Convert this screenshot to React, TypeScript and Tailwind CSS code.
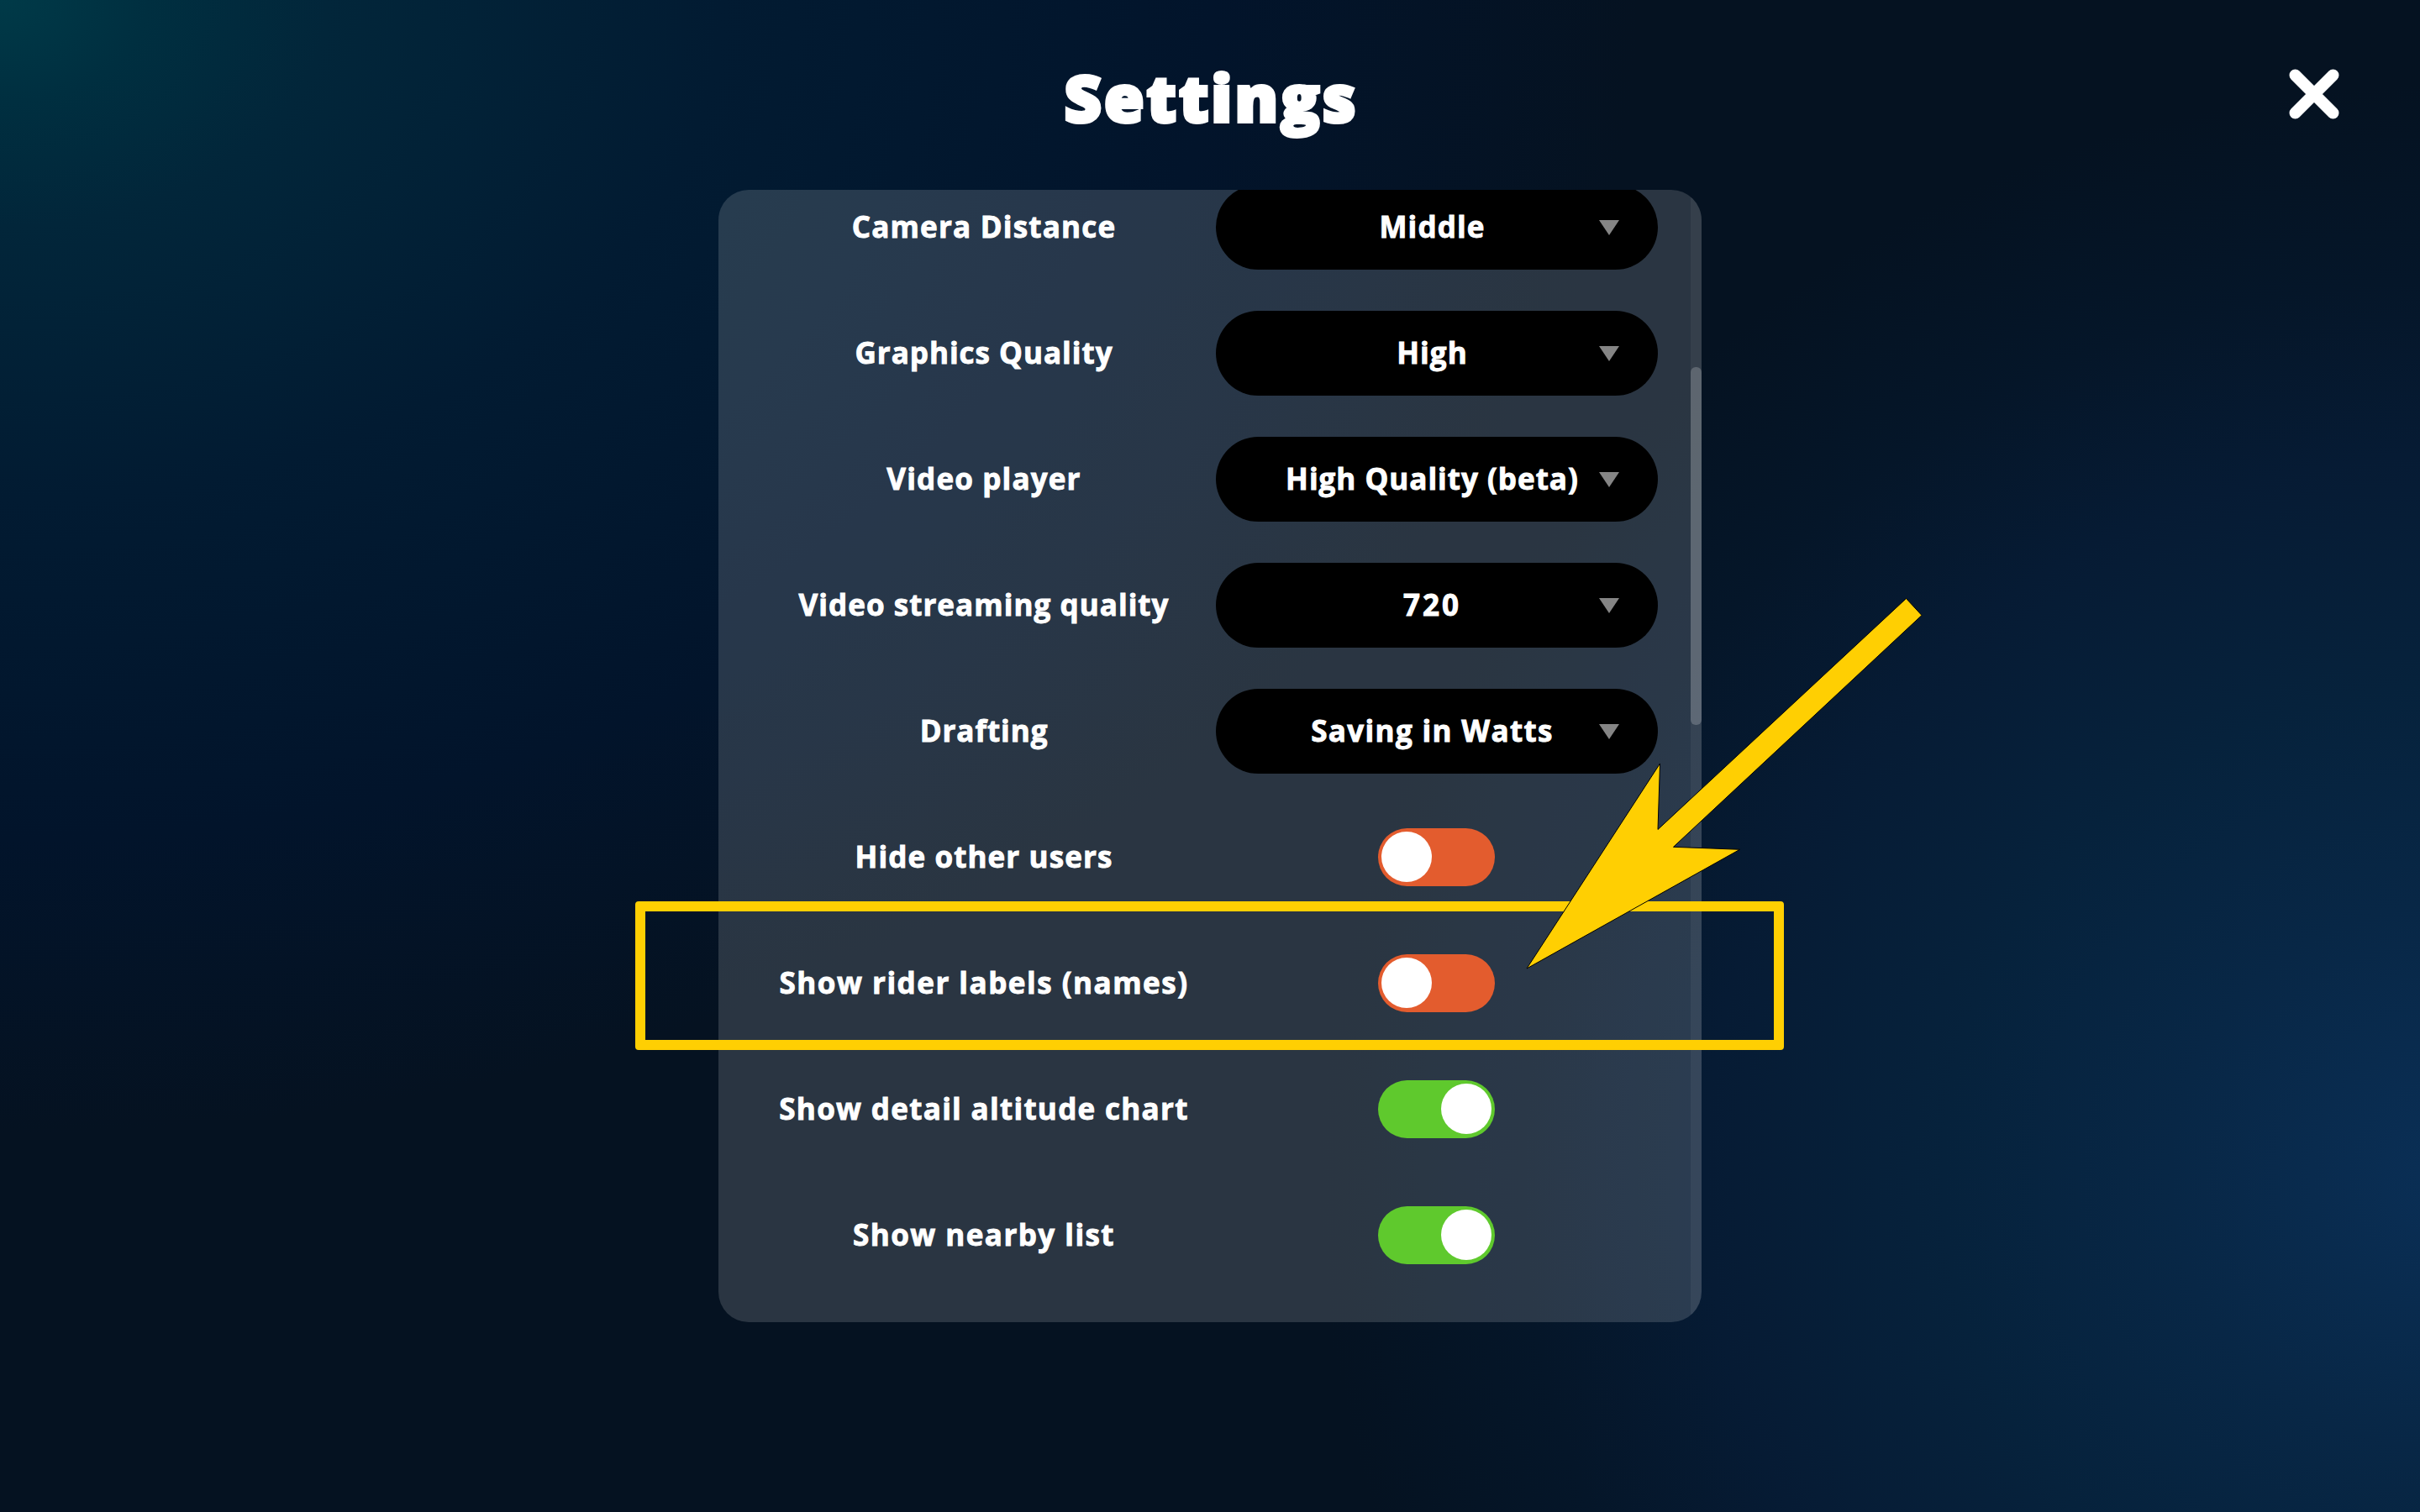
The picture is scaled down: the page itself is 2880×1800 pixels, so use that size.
import { useState } from "react";

type SelectRow = {
  kind: "select";
  label: string;
  labelClass: string;
  value: string;
  valueClass: string;
};
type ToggleRow = { kind: "toggle"; label: string; labelClass: string; on: boolean };
type Row = SelectRow | ToggleRow;

const ROWS: Row[] = [
  {
    kind: "select",
    label: "Camera Distance",
    labelClass: "tracking-[1.2px]",
    value: "Middle",
    valueClass: "tracking-[1.1px]",
  },
  {
    kind: "select",
    label: "Graphics Quality",
    labelClass: "tracking-[1px]",
    value: "High",
    valueClass: "tracking-[1.1px]",
  },
  {
    kind: "select",
    label: "Video player",
    labelClass: "tracking-[1.15px]",
    value: "High Quality (beta)",
    valueClass: "tracking-[1px]",
  },
  {
    kind: "select",
    label: "Video streaming quality",
    labelClass: "tracking-[1.05px]",
    value: "720",
    valueClass: "tracking-[3px]",
  },
  {
    kind: "select",
    label: "Drafting",
    labelClass: "tracking-[0.95px]",
    value: "Saving in Watts",
    valueClass: "tracking-[1.35px]",
  },
  { kind: "toggle", label: "Hide other users", labelClass: "tracking-[1.1px]", on: false },
  { kind: "toggle", label: "Show rider labels (names)", labelClass: "tracking-[1.5px]", on: false },
  { kind: "toggle", label: "Show detail altitude chart", labelClass: "tracking-[1.3px]", on: true },
  { kind: "toggle", label: "Show nearby list", labelClass: "tracking-[1.45px]", on: true },
];

function Select({ value, className }: { value: string; className: string }) {
  return (
    <button className="relative flex h-[101px] w-[526px] items-center justify-center rounded-full bg-black pr-[11px]">
      <span className={`whitespace-nowrap ${className}`}>{value}</span>
      <svg className="absolute right-[46px] top-[42px]" width="24" height="18" viewBox="0 0 24 18">
        <path d="M0 0H24L12 18Z" fill="#858585" />
      </svg>
    </button>
  );
}

function Toggle({ initial }: { initial: boolean }) {
  const [on, setOn] = useState(initial);
  return (
    <button
      onClick={() => setOn(!on)}
      className={`mr-px flex h-[69px] w-[139px] items-center rounded-full px-[4px] ${
        on ? "justify-end bg-[#5fc92d]" : "justify-start bg-[#e35c2e]"
      }`}
    >
      <span className="size-[60px] rounded-full bg-white" />
    </button>
  );
}

export default function App() {
  return (
    <div
      className="relative h-[1800px] w-[2880px] overflow-hidden bg-[#051221] font-['Open_Sans',sans-serif] text-white
                 bg-[radial-gradient(ellipse_1350px_1300px_at_2920px_1400px,#0a2f56_0%,#082746_25%,#06223c_45%,#061b34_66%,#051629_82%,#05122100_100%),radial-gradient(ellipse_1950px_1350px_at_0px_0px,#003a48_0%,#002f40_9%,#02263a_20%,#021b32_44%,#02142b_74%,#051221_100%)]"
    >
      {/* Header */}
      <header className="grid h-[226px] grid-cols-[1fr_auto_1fr] items-start">
        <h1
          className="col-start-2 pt-[60px] pl-[3px] text-[77px] leading-[112px] font-extrabold tracking-[3px]
                     [-webkit-text-stroke:4px_white]"
        >
          Settings
        </h1>
        <button className="mr-[96px] mt-[82px] justify-self-end" aria-label="Close">
          <svg width="60" height="60" viewBox="0 0 60 60">
            <path d="M7.5 7.5L52.5 52.5M52.5 7.5L7.5 52.5" stroke="#fff" strokeWidth="14" strokeLinecap="round" />
          </svg>
        </button>
      </header>

      {/* Scrollable panel */}
      <main className="mx-auto flex h-[1348px] w-[1170px] justify-between overflow-hidden rounded-[36px] bg-white/15">
        <div className="-mt-[31px] pl-[62px] text-[35px] font-bold [-webkit-text-stroke:0.9px_white]">
          {ROWS.map((row) => (
            <div key={row.label} className="grid h-[150px] grid-cols-[508px_526px] items-center gap-x-[22px]">
              <div className={`whitespace-nowrap text-center ${row.labelClass}`}>{row.label}</div>
              <div className="flex justify-center">
                {row.kind === "select" ? (
                  <Select value={row.value} className={row.valueClass} />
                ) : (
                  <Toggle initial={row.on} />
                )}
              </div>
            </div>
          ))}
        </div>
        <div className="w-[13px] bg-white/5 pt-[211px]">
          <div className="h-[426px] rounded-[6px] bg-white/20" />
        </div>
      </main>

      {/* Highlight frame and pointer over the rider labels row */}
      <div className="absolute left-[756px] top-[1073px] h-[177px] w-[1367px] rounded-[4px] border-12 border-[#ffcf02]" />
      <svg className="absolute left-[1800px] top-[700px]" width="500" height="470" viewBox="1800 700 500 470">
        <path
          d="M1817 1153L1975.5 909L1973 987.5L2268.5 712.5L2287 732.5L1991.5 1008.3L2070.5 1011.3Z"
          fill="#ffcf02"
          stroke="#000"
          strokeWidth="1"
        />
      </svg>
    </div>
  );
}
